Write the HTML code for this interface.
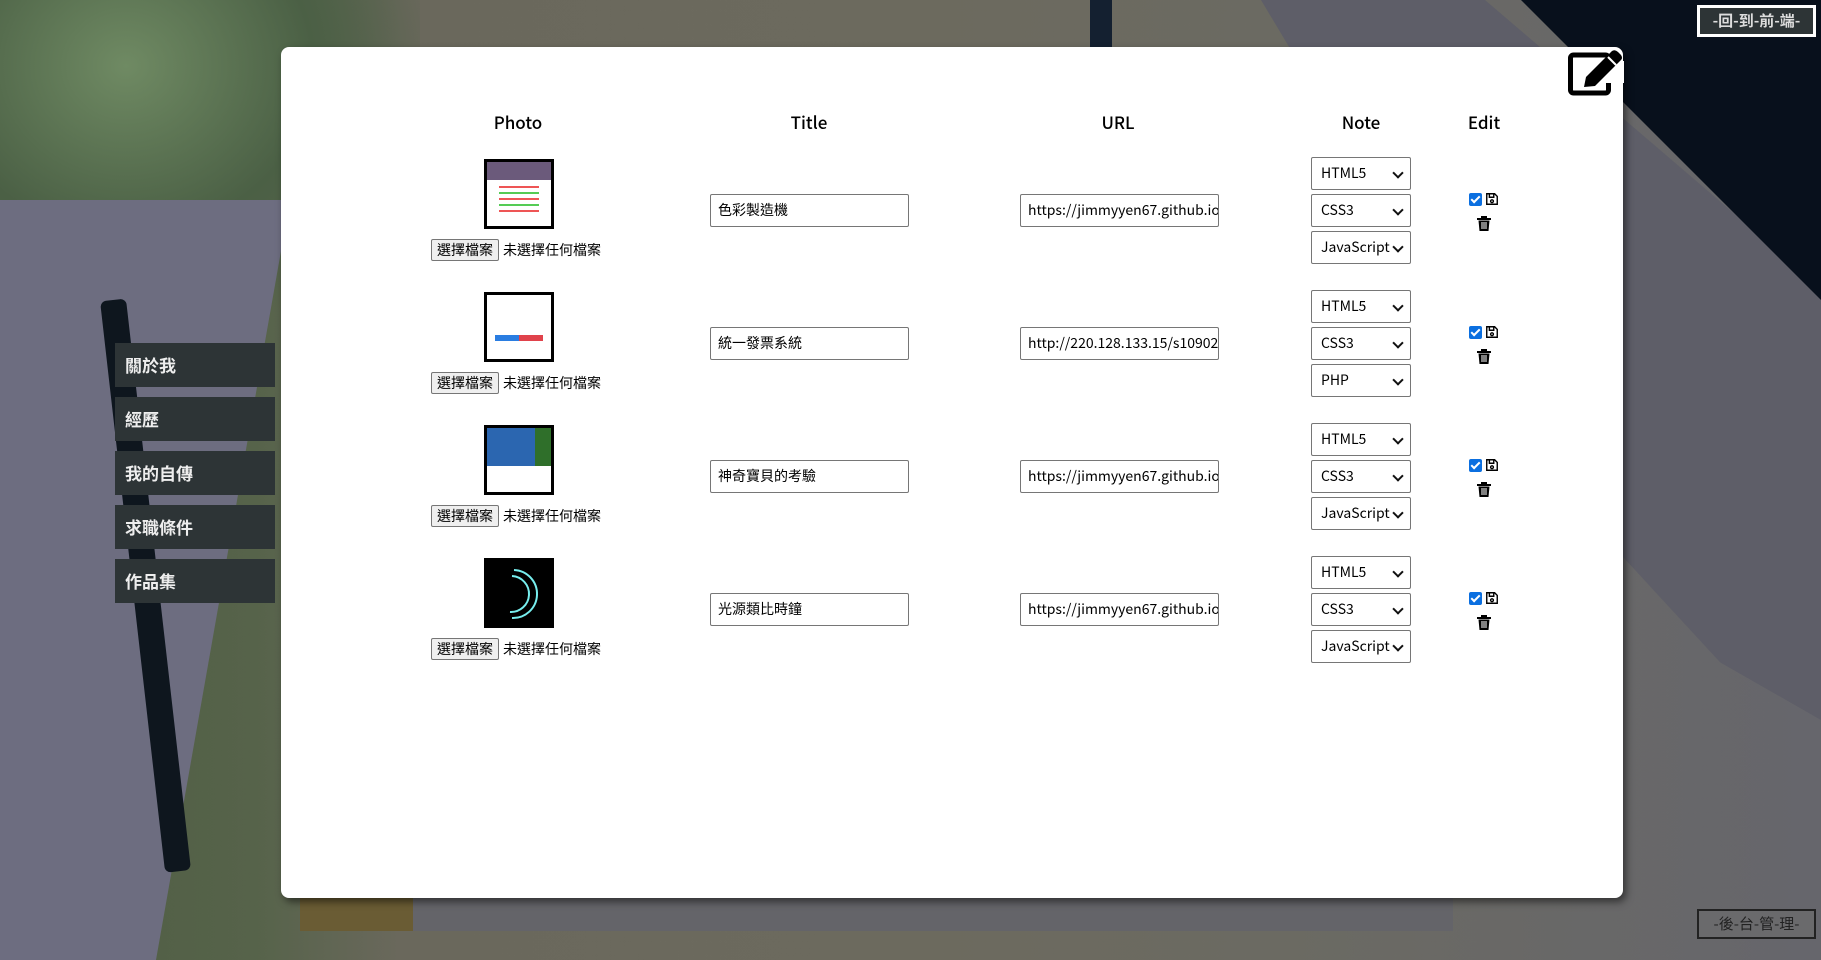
<!DOCTYPE html>
<html><head><meta charset="utf-8"><style>
*{box-sizing:border-box;margin:0;padding:0}
body{width:1821px;height:931px;overflow:hidden;position:relative;font-family:"Noto Sans CJK TC","Liberation Sans",sans-serif;
background:linear-gradient(90deg,#4e5c42 0%,#56634a 14%,#6a685c 22%,#6c6a5e 50%,#6b6a62 70%,#66666c 100%)}
.plant{position:absolute;left:0;top:0;width:420px;height:330px;background:radial-gradient(ellipse at 30% 20%,#6f8a63 0%,#4b6045 45%,rgba(80,95,70,0) 75%)}
.bgl{position:absolute;left:-40px;top:200px;width:330px;height:760px;background:#6d6d80;transform:skewX(-10deg);transform-origin:0 0}
.kb{position:absolute;left:413px;top:890px;width:1040px;height:41px;background:#646469}
.olive{position:absolute;left:300px;top:880px;width:120px;height:51px;background:#6a5c34}
.pen{position:absolute;left:100px;top:300px;width:26px;height:575px;background:#0e161e;transform:rotate(-6.5deg);transform-origin:50% 0;border-radius:6px}
.pen2{position:absolute;left:1090px;top:0;width:22px;height:50px;background:#142030}
.tab{position:absolute;right:0;top:0;width:560px;height:720px;background:#5e5e68;clip-path:polygon(0 0,40% 0,100% 40%,100% 100%,82% 92%,50% 65%)}
.dark{position:absolute;right:0;top:0;width:300px;height:300px;background:#08101c;clip-path:polygon(0 0,100% 0,100% 100%)}
.panel{position:absolute;left:281px;top:47px;width:1342px;height:851px;background:#fff;border-radius:8px;box-shadow:3px 4px 8px rgba(0,0,0,.5)}
.nav{position:absolute;left:115px;width:160px;height:44px;background:#2d3436;color:#eee;font-size:17px;font-weight:bold;line-height:44px;padding-left:10px}
.th{position:absolute;top:109px;font-size:17px;font-weight:500;transform:translateX(-50%)}
.a{position:absolute}
.img{position:absolute;left:484px;width:70px;height:70px;border:3px solid #000;background:#fff}
.fb{position:absolute;left:431px;height:22px;font-size:14px;line-height:20px;white-space:nowrap}
.fb span.b{display:inline-block;border:1px solid #767676;background:#efefef;border-radius:2px;padding:0 5px;margin-right:4px}
.inp{position:absolute;width:199px;height:33px;border:1px solid #767676;border-radius:2px;font-size:14px;line-height:31px;padding-left:7px;white-space:nowrap;overflow:hidden}
.sel{position:absolute;left:1311px;width:100px;height:33px;border:1px solid #767676;border-radius:2px;font-size:14px;line-height:31px;padding-left:9px}
.sel:after{content:"";position:absolute;right:8px;top:11px;width:6px;height:6px;border-right:2px solid #111;border-bottom:2px solid #111;transform:rotate(45deg)}
.cb{position:absolute;left:1469px;width:13px;height:13px;background:#0b6fe0;border-radius:2px}
.cb:after{content:"";position:absolute;left:4px;top:1px;width:3px;height:7px;border:solid #fff;border-width:0 2px 2px 0;transform:rotate(45deg)}
.btn{position:absolute;font-size:15px;font-weight:bold;text-align:center;white-space:nowrap}
</style></head><body>
<div class="plant"></div><div class="bgl"></div><div class="olive"></div><div class="kb"></div><div class="pen"></div><div class="pen2"></div><div class="tab"></div><div class="dark"></div>
<div class="btn" style="left:1697px;top:5px;width:119px;height:32px;border:3px solid #fff;background:#2d3436;color:#ddd;line-height:26px">-回-到-前-端-</div>
<div class="btn" style="left:1697px;top:909px;width:119px;height:30px;border:2px solid #222;background:#6a6a6c;color:#222;line-height:26px;font-weight:normal">-後-台-管-理-</div>
<div class="nav" style="top:343px">關於我</div>
<div class="nav" style="top:397px">經歷</div>
<div class="nav" style="top:451px">我的自傳</div>
<div class="nav" style="top:505px">求職條件</div>
<div class="nav" style="top:559px">作品集</div>
<div class="panel"></div>
<svg class="a" style="left:1568px;top:49px" width="56" height="47" viewBox="0 0 56 47"><rect x="2.5" y="6" width="38" height="38" rx="3" fill="none" stroke="#000" stroke-width="5"/><rect x="22" y="12" width="34" height="22" fill="#fff"/><path d="M16 38 L18 28 L44 2 Q47 0 50 3 L53 6 Q55 9 53 11 L27 37 Z" fill="#000"/><path d="M40 8 L48 16" stroke="#fff" stroke-width="2"/></svg>
<div class="th" style="left:518px">Photo</div>
<div class="th" style="left:809px">Title</div>
<div class="th" style="left:1118px">URL</div>
<div class="th" style="left:1361px">Note</div>
<div class="th" style="left:1484px">Edit</div>

<div class="img" style="top:159px"><div style="height:18px;background:#6b5a7b"></div><div style="margin:6px 12px;height:30px;background:repeating-linear-gradient(#e55 0 2px,#fff 2px 6px,#5c5 6px 8px,#fff 8px 12px)"></div></div>
<div class="fb" style="top:239px"><span class="b">選擇檔案</span>未選擇任何檔案</div>
<div class="inp" style="left:710px;top:194px">色彩製造機</div>
<div class="inp" style="left:1020px;top:194px">https://jimmyyen67.github.io/</div>
<div class="sel" style="top:157px">HTML5</div><div class="sel" style="top:194px">CSS3</div><div class="sel" style="top:231px">JavaScript</div>

<div class="img" style="top:292px"><div style="margin:40px 8px 0;height:6px;background:linear-gradient(90deg,#2a7de1 50%,#e0424b 50%)"></div></div>
<div class="fb" style="top:372px"><span class="b">選擇檔案</span>未選擇任何檔案</div>
<div class="inp" style="left:710px;top:327px">統一發票系統</div>
<div class="inp" style="left:1020px;top:327px">http://220.128.133.15/s109020</div>
<div class="sel" style="top:290px">HTML5</div><div class="sel" style="top:327px">CSS3</div><div class="sel" style="top:364px">PHP</div>

<div class="img" style="top:425px"><div style="height:38px;background:linear-gradient(90deg,#2b66b0 75%,#2f6f2a 75%)"></div></div>
<div class="fb" style="top:505px"><span class="b">選擇檔案</span>未選擇任何檔案</div>
<div class="inp" style="left:710px;top:460px">神奇寶貝的考驗</div>
<div class="inp" style="left:1020px;top:460px">https://jimmyyen67.github.io/</div>
<div class="sel" style="top:423px">HTML5</div><div class="sel" style="top:460px">CSS3</div><div class="sel" style="top:497px">JavaScript</div>

<div class="img" style="top:558px;border:0;background:#000"><svg width="70" height="70"><path d="M30 12 A24 24 0 0 1 28 60" fill="none" stroke="#7ee" stroke-width="2"/><path d="M28 18 A18 18 0 0 1 26 54" fill="none" stroke="#7ee" stroke-width="2"/></svg></div>
<div class="fb" style="top:638px"><span class="b">選擇檔案</span>未選擇任何檔案</div>
<div class="inp" style="left:710px;top:593px">光源類比時鐘</div>
<div class="inp" style="left:1020px;top:593px">https://jimmyyen67.github.io/</div>
<div class="sel" style="top:556px">HTML5</div><div class="sel" style="top:593px">CSS3</div><div class="sel" style="top:630px">JavaScript</div>

<div class="cb" style="top:193px"></div><div class="cb" style="top:326px"></div><div class="cb" style="top:459px"></div><div class="cb" style="top:592px"></div>
<svg class="a" style="left:1485px;top:192px" width="14" height="14" viewBox="0 0 16 16"><g fill="none" stroke="#000" stroke-width="1.6"><path d="M2 2h9l3 3v9H2z"/><path d="M5 2v4h5V2"/><circle cx="8" cy="10.5" r="1.6"/></g></svg>
<svg class="a" style="left:1485px;top:325px" width="14" height="14" viewBox="0 0 16 16"><g fill="none" stroke="#000" stroke-width="1.6"><path d="M2 2h9l3 3v9H2z"/><path d="M5 2v4h5V2"/><circle cx="8" cy="10.5" r="1.6"/></g></svg>
<svg class="a" style="left:1485px;top:458px" width="14" height="14" viewBox="0 0 16 16"><g fill="none" stroke="#000" stroke-width="1.6"><path d="M2 2h9l3 3v9H2z"/><path d="M5 2v4h5V2"/><circle cx="8" cy="10.5" r="1.6"/></g></svg>
<svg class="a" style="left:1485px;top:591px" width="14" height="14" viewBox="0 0 16 16"><g fill="none" stroke="#000" stroke-width="1.6"><path d="M2 2h9l3 3v9H2z"/><path d="M5 2v4h5V2"/><circle cx="8" cy="10.5" r="1.6"/></g></svg>
<svg class="a" style="left:1476px;top:215px" width="16" height="17" viewBox="0 0 16 17"><path d="M1 3h14v2H1zM5 1h6v2H5zM2.5 5.5h11L12.5 16h-9z" fill="#000"/><path d="M6 7v7M8 7v7M10 7v7" stroke="#fff" stroke-width="1"/></svg>
<svg class="a" style="left:1476px;top:348px" width="16" height="17" viewBox="0 0 16 17"><path d="M1 3h14v2H1zM5 1h6v2H5zM2.5 5.5h11L12.5 16h-9z" fill="#000"/><path d="M6 7v7M8 7v7M10 7v7" stroke="#fff" stroke-width="1"/></svg>
<svg class="a" style="left:1476px;top:481px" width="16" height="17" viewBox="0 0 16 17"><path d="M1 3h14v2H1zM5 1h6v2H5zM2.5 5.5h11L12.5 16h-9z" fill="#000"/><path d="M6 7v7M8 7v7M10 7v7" stroke="#fff" stroke-width="1"/></svg>
<svg class="a" style="left:1476px;top:614px" width="16" height="17" viewBox="0 0 16 17"><path d="M1 3h14v2H1zM5 1h6v2H5zM2.5 5.5h11L12.5 16h-9z" fill="#000"/><path d="M6 7v7M8 7v7M10 7v7" stroke="#fff" stroke-width="1"/></svg>
</body></html>
